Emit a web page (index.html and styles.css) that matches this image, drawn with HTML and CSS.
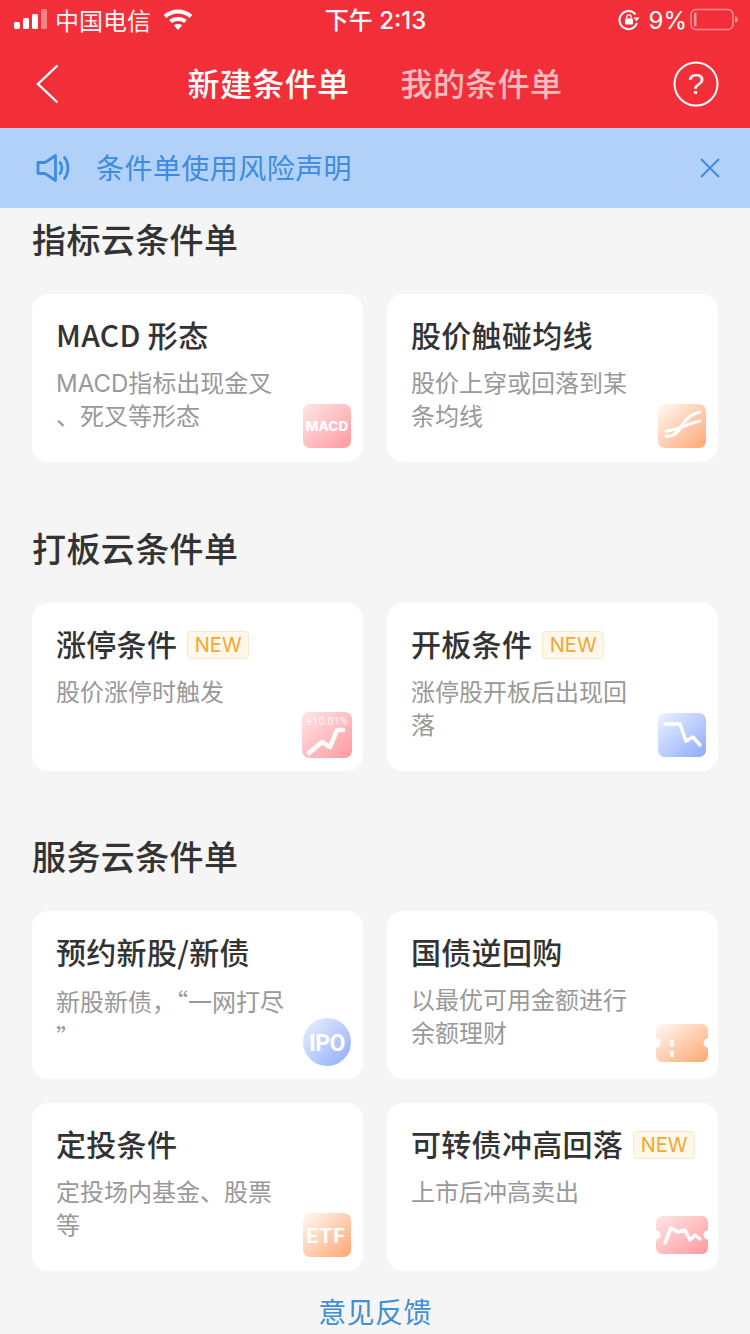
FILE: index.html
```html
<!DOCTYPE html>
<html lang="zh-CN">
<head>
<meta charset="utf-8">
<title>新建条件单</title>
<link rel="stylesheet" href="styles.css">
</head>
<body>
<div class="page">
  <header class="top">
    <div class="status">
      <div class="status-left">
        <svg class="signal" width="36" height="22" viewBox="0 0 36 22"><rect x="1" y="13" width="6" height="7" rx="1.5" fill="#fff"/><rect x="10" y="9" width="6" height="11" rx="1.5" fill="#fff"/><rect x="19" y="5" width="6" height="15" rx="1.5" fill="#fff"/><rect x="28" y="0" width="6" height="20" rx="1.5" fill="#fff" opacity=".4"/></svg>
        <span class="carrier">中国电信</span>
        <svg class="wifi" width="30" height="22" viewBox="0 0 30 22"><path d="M2 7.500C9.500 .8 20.500 .8 28 7.500" fill="none" stroke="#fff" stroke-width="4"/><path d="M7.500 12.500C11.500 9 18.500 9 22.500 12.500" fill="none" stroke="#fff" stroke-width="4"/><path d="M10.800 16.300C13.200 14.400 16.800 14.400 19.200 16.300L15 21Z" fill="#fff"/></svg>
      </div>
      <div class="time">下午 2:13</div>
      <div class="status-right">
        <svg class="rot" width="22" height="22" viewBox="0 0 22 22"><path d="M17.500 5.500A9 9 0 1 0 19 14" fill="none" stroke="#fff" stroke-width="2"/><path d="M15.500 8.500L21.500 8.500L18.500 12.500Z" fill="#fff"/><rect x="7" y="9.500" width="8" height="6" rx="1" fill="#fff"/><path d="M8.800 9.500V8a2.200 2.200 0 0 1 4.400 0v1.500" fill="none" stroke="#fff" stroke-width="1.300"/></svg>
        <span class="pct">9%</span>
        <svg class="batt" width="48" height="24" viewBox="0 0 48 24"><rect x="1" y="1.500" width="42" height="20" rx="5" fill="none" stroke="#fff" stroke-opacity=".45" stroke-width="1.500"/><rect x="4" y="4.500" width="2.500" height="14" rx="1" fill="#fff" opacity=".5"/><path d="M45 8.500a3 3 0 0 1 0 6z" fill="#fff" opacity=".45"/></svg>
      </div>
    </div>
    <nav class="nav">
      <svg class="back" width="24" height="40" viewBox="0 0 24 40"><path d="M21.500 1.500L2 20L21.500 38.500" fill="none" stroke="#fff" stroke-width="2.400"/></svg>
      <div class="tabs"><span class="tab tab-on">新建条件单</span><span class="tab tab-off">我的条件单</span></div>
      <svg class="help" width="46" height="46" viewBox="0 0 46 46"><circle cx="23" cy="23" r="21.500" fill="none" stroke="#fff" stroke-width="2"/><text x="23" y="33" text-anchor="middle" class="help-q">?</text></svg>
    </nav>
  </header>

  <div class="banner">
    <svg class="speaker" width="34" height="30" viewBox="0 0 34 30"><path d="M2 9.500H9L19.500 2.500V27.500L9 20.500H2Z" fill="none" stroke="#3e8be0" stroke-width="2.800" stroke-linejoin="round"/><path d="M24 9.500C26.500 12.500 26.500 17.500 24 20.500" fill="none" stroke="#3e8be0" stroke-width="2.800" stroke-linecap="round"/><path d="M28.500 4.500C33 10 33 20 28.500 25.500" fill="none" stroke="#3e8be0" stroke-width="2.800" stroke-linecap="round"/></svg>
    <span class="banner-text">条件单使用风险声明</span>
    <svg class="close" width="20" height="20" viewBox="0 0 20 20"><path d="M1 1L19 19M19 1L1 19" stroke="#3e8be0" stroke-width="2"/></svg>
  </div>

  <main class="content">
    <section class="section">
      <h2 class="section-title">指标云条件单</h2>
      <div class="grid">
        <article class="card">
          <h3 class="card-title">MACD 形态</h3>
          <p class="card-desc">MACD指标出现金叉<br>、死叉等形态</p>
          <svg class="icon icon-macd" width="48" height="44" viewBox="0 0 48 44"><defs><linearGradient id="gr1" x1="0" y1="0" x2="1" y2="1"><stop offset="0" stop-color="#ffe6e7"/><stop offset="1" stop-color="#ff999e"/></linearGradient></defs><rect width="48" height="44" rx="7" fill="url(#gr1)"/><text x="24" y="26.500" text-anchor="middle" class="ic-text ic-macd">MACD</text></svg>
        </article>
        <article class="card">
          <h3 class="card-title">股价触碰均线</h3>
          <p class="card-desc">股价上穿或回落到某<br>条均线</p>
          <svg class="icon icon-f" width="48" height="44" viewBox="0 0 48 44"><defs><linearGradient id="or1" x1="0" y1="0" x2="1" y2="1"><stop offset="0" stop-color="#fff9f5"/><stop offset="1" stop-color="#ffa672"/></linearGradient></defs><rect width="48" height="44" rx="7" fill="url(#or1)"/><path d="M8 32C14 33 18 30 21 26C25 20 29 11 42 8" fill="none" stroke="#fff" stroke-width="3" stroke-linecap="round"/><path d="M8 27C18 27 28 20 42 17" fill="none" stroke="#fff" stroke-width="3" stroke-linecap="round"/></svg>
        </article>
      </div>
    </section>

    <section class="section">
      <h2 class="section-title">打板云条件单</h2>
      <div class="grid">
        <article class="card">
          <h3 class="card-title">涨停条件<span class="new">NEW</span></h3>
          <p class="card-desc">股价涨停时触发</p>
          <svg class="icon icon-up" width="50" height="46" viewBox="0 0 50 46"><rect width="50" height="46" rx="7" fill="url(#gr1)"/><text x="25" y="13" text-anchor="middle" class="ic-text ic-pct">+10.01%</text><path d="M7 41L20 30L28 35L35 18H41" fill="none" stroke="#fff" stroke-width="4.500" stroke-linecap="round" stroke-linejoin="round"/></svg>
        </article>
        <article class="card">
          <h3 class="card-title">开板条件<span class="new">NEW</span></h3>
          <p class="card-desc">涨停股开板后出现回<br>落</p>
          <svg class="icon icon-down" width="48" height="44" viewBox="0 0 48 44"><defs><linearGradient id="bl1" x1="0" y1="0" x2="1" y2="1"><stop offset="0" stop-color="#eef2fe"/><stop offset="1" stop-color="#8cabfa"/></linearGradient></defs><rect width="48" height="44" rx="7" fill="url(#bl1)"/><path d="M7 11H22L28 28L35 24L42 32" fill="none" stroke="#fff" stroke-width="3.500" stroke-linecap="round" stroke-linejoin="round"/></svg>
        </article>
      </div>
    </section>

    <section class="section">
      <h2 class="section-title">服务云条件单</h2>
      <div class="grid">
        <article class="card">
          <h3 class="card-title">预约新股/新债</h3>
          <p class="card-desc">新股新债，<span class="quote">“</span>一网打尽<br><span class="quote">”</span></p>
          <svg class="icon icon-ipo" width="48" height="48" viewBox="0 0 48 48"><circle cx="24" cy="24" r="24" fill="url(#bl1)"/><text x="24" y="32.500" text-anchor="middle" class="ic-text ic-ipo">IPO</text></svg>
        </article>
        <article class="card">
          <h3 class="card-title">国债逆回购</h3>
          <p class="card-desc">以最优可用金额进行<br>余额理财</p>
          <svg class="icon icon-ticket" width="52" height="38" viewBox="0 0 52 38"><path d="M6 0H46A6 6 0 0 1 52 6V14.500A4.500 4.500 0 0 0 52 23.500V32A6 6 0 0 1 46 38H6A6 6 0 0 1 0 32V23.500A4.500 4.500 0 0 0 0 14.500V6A6 6 0 0 1 6 0Z" fill="url(#or1)"/><path d="M16 16V23M16 27V33" stroke="#fff" stroke-width="3.500"/></svg>
        </article>
        <article class="card">
          <h3 class="card-title">定投条件</h3>
          <p class="card-desc">定投场内基金、股票<br>等</p>
          <svg class="icon icon-etf" width="48" height="44" viewBox="0 0 48 44"><rect width="48" height="44" rx="7" fill="url(#or1)"/><text x="23" y="30" text-anchor="middle" class="ic-text ic-etf">ETF</text></svg>
        </article>
        <article class="card">
          <h3 class="card-title">可转债冲高回落<span class="new">NEW</span></h3>
          <p class="card-desc">上市后冲高卖出</p>
          <svg class="icon icon-wave" width="52" height="38" viewBox="0 0 52 38"><path d="M6 0H46A6 6 0 0 1 52 6V14.500A4.500 4.500 0 0 0 52 23.500V32A6 6 0 0 1 46 38H6A6 6 0 0 1 0 32V23.500A4.500 4.500 0 0 0 0 14.500V6A6 6 0 0 1 6 0Z" fill="url(#gr1)"/><path d="M9 27L15 12L22 16L29 14L34 24L39 19L44 23" fill="none" stroke="#fff" stroke-width="3.500" stroke-linecap="round" stroke-linejoin="round"/></svg>
        </article>
      </div>
    </section>

    <div class="feedback">意见反馈</div>
  </main>
</div>
</body>
</html>
```
FILE: styles.css
```css
* { box-sizing: border-box; }
html, body { margin: 0; padding: 0; }
body {
  width: 750px;
  height: 1334px;
  overflow: hidden;
  background: #f5f5f5;
  font-family: "Noto Sans CJK SC", sans-serif;
}
.page { width: 750px; height: 1334px; overflow: hidden; }

.top { background: #f22f39; color: #fff; height: 128px; }
.status {
  height: 40px;
  display: grid;
  grid-template-columns: 1fr auto 1fr;
  align-items: center;
  padding: 0 12px 0 13px;
}
.status-left { display: flex; align-items: center; }
.signal { margin-right: 6px; }
.carrier { font-size: 24px; line-height: 38px; color: #fff; opacity: .95; }
.wifi { margin-left: 12px; }
.time {
  font-family: Inter, "Noto Sans CJK SC", sans-serif;
  font-size: 24px;
  line-height: 38px;
  padding-top: 2px;
  font-weight: 500;
}
.status-right { display: flex; align-items: center; justify-content: flex-end; }
.pct {
  font-family: Inter, sans-serif;
  font-size: 24px;
  line-height: 38px;
  padding-top: 2px;
  margin: 0 3px 0 9px;
}

.nav {
  height: 88px;
  display: flex;
  align-items: center;
  justify-content: space-between;
  padding: 0 31px 0 36px;
}
.tabs { display: flex; gap: 52px; margin-left: 16px; padding-bottom: 4px; }
.tab { font-size: 32px; line-height: 44px; font-weight: 500; width: 161px; letter-spacing: .4px; white-space: nowrap; }
.tab-on { color: #fff; }
.tab-off { color: #fbbcc0; }
.help-q { font-size: 30px; fill: #fff; font-family: "Liberation Sans", sans-serif; }

.banner {
  height: 80px;
  background: #b2d1f8;
  display: flex;
  align-items: center;
  padding: 0 30px 0 36px;
}
.speaker { flex: none; }
.banner-text {
  flex: 1;
  margin-left: 26px;
  padding-bottom: 2px;
  color: #3e8be0;
  font-size: 28px;
  letter-spacing: .45px;
  line-height: 40px;
}
.close { flex: none; }

.content { padding: 10px 32px 0; }
.section + .section { margin-top: 64.5px; }
.section-title {
  margin: 0 0 32px;
  height: 44px;
  font-size: 34px;
  line-height: 42px;
  font-weight: 500;
  letter-spacing: .4px;
  color: #333;
}
.grid {
  display: grid;
  grid-template-columns: 331px 331px;
  gap: 24px;
}
.card {
  position: relative;
  height: 168px;
  background: #fff;
  border-radius: 16px;
  padding: 19px 20px 0 24px;
}
.card-title {
  margin: 0 0 12px;
  display: flex;
  align-items: center;
  height: 42px;
  font-size: 30px;
  line-height: 42px;
  font-weight: 500;
  letter-spacing: .3px;
  color: #333;
  white-space: nowrap;
}
.card-desc {
  margin: 0;
  font-family: Inter, "Noto Sans CJK SC", sans-serif;
  font-size: 24px;
  line-height: 33px;
  color: #999;
  white-space: nowrap;
}
.quote { font-family: "Noto Sans CJK SC", sans-serif; }
.new {
  margin: 4px 0 0 10px;
  width: 62px;
  height: 28px;
  border: 1px solid #fbe7c9;
  border-radius: 4px;
  background: #fff7ea;
  color: #f1a832;
  font-family: Inter, sans-serif;
  font-size: 20px;
  font-weight: 400;
  letter-spacing: 0;
  line-height: 26px;
  text-align: center;
}

.icon { position: absolute; }
.icon-macd, .icon-f { right: 12px; bottom: 14px; }
.icon-up { right: 11px; bottom: 13px; }
.icon-down { right: 12px; bottom: 14px; }
.icon-ipo { right: 12px; bottom: 13px; }
.icon-ticket { right: 10px; bottom: 17px; }
.icon-etf { right: 12px; bottom: 14px; }
.icon-wave { right: 10px; bottom: 17px; }

.ic-text { fill: #fff; font-family: Roboto, sans-serif; font-weight: 700; }
.ic-macd { font-family: Inter, sans-serif; font-size: 13.500px; font-weight: 800; }
.ic-pct { font-size: 11px; font-weight: 400; opacity: .8; }
.ic-ipo { font-size: 23px; letter-spacing: -.5px; }
.ic-etf { font-size: 21px; letter-spacing: 1px; }

.feedback {
  margin-top: 21px;
  text-align: center;
  font-size: 28px;
  line-height: 38px;
  letter-spacing: .4px;
  color: #3f8fd3;
}
```
